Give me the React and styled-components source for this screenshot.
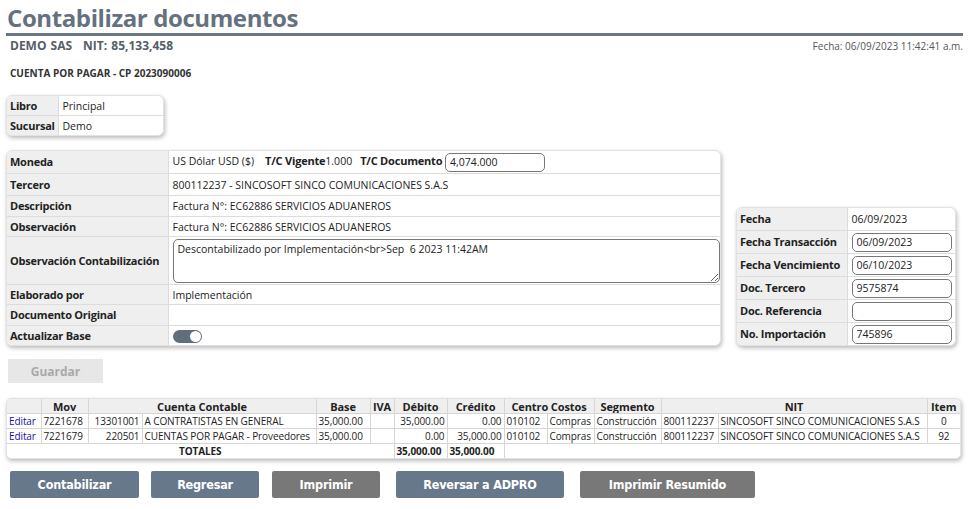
import React from "react";
import styled, { createGlobalStyle } from "styled-components";

const Global = createGlobalStyle`
  body {
    margin: 0;
    background: #fff;
    font-family: "Open Sans", "Noto Sans", sans-serif;
    color: #222;
  }
`;

const Page = styled.div`
  width: 968px;
  height: 509px;
  overflow: hidden;
  padding: 0 5px 0 6px;
  box-sizing: border-box;
`;

const Title = styled.h1`
  margin: 0;
  padding: 2px 0 0 1px;
  font-size: 24px;
  letter-spacing: -0.4px;
  font-weight: 700;
  line-height: 31px;
  color: #65717e;
  border-bottom: 3px solid #6b7785;
`;

const InfoBar = styled.div`
  display: flex;
  justify-content: space-between;
  align-items: baseline;
  padding: 1px 0 0 4px;
  & .company {
    font-size: 12px;
    font-weight: 700;
    color: #555e68;
    word-spacing: 1px;
  }
  & .company span + span {
    margin-left: 11px;
  }
  & .date {
    font-size: 10px;
    color: #555;
  }
`;

const DocTitle = styled.div`
  margin: 12px 0 0 4px;
  font-size: 10px;
  font-weight: 700;
  color: #333;
`;

const Box = styled.div`
  background: #fff;
  border-radius: 6px;
  box-shadow: 1px 2px 4px rgba(0, 0, 0, 0.28);
  border: 1px solid #e2e2e2;
  overflow: hidden;
  width: ${(p) => p.$w}px;
`;

const FormTable = styled.table`
  width: 100%;
  border-collapse: collapse;
  table-layout: fixed;
  font-size: 10.5px;
  line-height: 14px;
  & td {
    border-top: 1px solid #dcdcdc;
    padding: 0 3px 0 4px;
    height: ${(p) => p.$rowH || 19}px;
    white-space: nowrap;
    overflow: hidden;
  }
  & tr:first-child td {
    border-top: none;
  }
  & td.lbl {
    background: #efefef;
    font-weight: 700;
    font-size: 11px;
    letter-spacing: -0.25px;
    color: #222;
    border-right: 1px solid #dcdcdc;
    padding: 0 3px;
  }
`;

const Input = styled.input`
  font-family: "Open Sans", sans-serif;
  font-size: 10.5px;
  height: 19px;
  width: ${(p) => p.$w}px;
  box-sizing: border-box;
  border: 1px solid #777;
  border-radius: 5px;
  padding: 0 4px;
  color: #222;
  margin: 0;
  vertical-align: middle;
  display: ${(p) => (p.$block ? "block" : "inline-block")};
`;

const TextArea = styled.textarea`
  font-family: "Open Sans", sans-serif;
  font-size: 10.5px;
  width: 547px;
  height: 44px;
  box-sizing: border-box;
  border: 1px solid #777;
  border-radius: 5px;
  padding: 2px 4px;
  margin: 1px 0 0 0;
  display: block;
  color: #222;
`;

const Toggle = styled.span`
  display: inline-block;
  position: relative;
  width: 29px;
  height: 13px;
  border-radius: 7px;
  background: #5f6e7c;
  vertical-align: middle;
  &::after {
    content: "";
    position: absolute;
    right: 1px;
    top: 1px;
    width: 11px;
    height: 11px;
    border-radius: 50%;
    background: #fff;
  }
`;

const Bold = styled.b`
  font-weight: 700;
  font-size: 11px;
  letter-spacing: -0.2px;
  margin-left: ${(p) => p.$ml || 0}px;
`;

const Section = styled.div`
  display: flex;
  align-items: flex-end;
  gap: 15px;
  margin-top: ${(p) => p.$mt || 0}px;
`;

const GuardarBtn = styled.button`
  margin: 13px 0 0 2px;
  width: 95px;
  height: 24px;
  border: none;
  background: #e7e7e7;
  color: #a9a9a9;
  font-family: "Open Sans", sans-serif;
  font-weight: 700;
  font-size: 12px;
  display: block;
`;

const GridBox = styled(Box)`
  margin-top: 15px;
  border-radius: 5px;
`;

const Grid = styled.table`
  width: 100%;
  border-collapse: collapse;
  font-size: 10px;
  letter-spacing: -0.1px;
  table-layout: fixed;
  & th,
  & td {
    border: 1px solid #d6d6d6;
    padding: 0 2px;
    height: 14px;
    line-height: 13px;
    white-space: nowrap;
    overflow: hidden;
  }
  & tr:first-child th {
    border-top: none;
  }
  & th:first-child,
  & td:first-child {
    border-left: none;
  }
  & th:last-child,
  & td:last-child {
    border-right: none;
  }
  & tr:last-child td {
    border-bottom: none;
  }
  & th {
    background: #efefef;
    font-weight: 700;
    font-size: 11px;
    text-align: center;
  }
  & td.r {
    text-align: right;
  }
  & td.c {
    text-align: center;
  }
  & td.b {
    font-weight: 700;
  }
  & a {
    color: #1a0dab;
    text-decoration: none;
  }
`;

const Actions = styled.div`
  display: flex;
  margin: 12px 0 0 4px;
`;

const ActionBtn = styled.button`
  height: 27px;
  width: ${(p) => p.$w}px;
  margin-right: ${(p) => p.$mr}px;
  border: none;
  border-radius: 2px;
  background: ${(p) => (p.$gray ? "#787878" : "#67788a")};
  color: #fff;
  font-family: "DejaVu Sans Condensed", "Liberation Sans Narrow", sans-serif;
  font-weight: 700;
  font-size: 12.5px;
  letter-spacing: -0.2px;
`;

const cols = [34, 47, 54, 174, 54, 24, 53, 57, 43, 47, 67, 57, 209, 33];

const rows = [
  ["7221678", "13301001", "A CONTRATISTAS EN GENERAL", "35,000.00", "35,000.00", "0.00", "0"],
  ["7221679", "220501", "CUENTAS POR PAGAR - Proveedores", "35,000.00", "0.00", "35,000.00", "92"],
];

const sideRows = [
  ["Fecha Transacción", "06/09/2023"],
  ["Fecha Vencimiento", "06/10/2023"],
  ["Doc. Tercero", "9575874"],
  ["Doc. Referencia", ""],
  ["No. Importación", "745896"],
];

export default function App() {
  return (
    <Page>
      <Global />
      <Title>Contabilizar documentos</Title>
      <InfoBar>
        <div className="company">
          <span>DEMO SAS</span>
          <span>NIT: 85,133,458</span>
        </div>
        <div className="date">Fecha: 06/09/2023 11:42:41 a.m.</div>
      </InfoBar>
      <DocTitle>CUENTA POR PAGAR - CP 2023090006</DocTitle>

      <Section $mt={15}>
        <Box $w={156}>
          <FormTable $rowH={19}>
            <colgroup>
              <col style={{ width: 51 }} />
              <col />
            </colgroup>
            <tbody>
              <tr>
                <td className="lbl">Libro</td>
                <td>Principal</td>
              </tr>
              <tr>
                <td className="lbl">Sucursal</td>
                <td>Demo</td>
              </tr>
            </tbody>
          </FormTable>
        </Box>
      </Section>

      <Section $mt={14}>
        <Box $w={713}>
          <FormTable>
            <colgroup>
              <col style={{ width: 161 }} />
              <col />
            </colgroup>
            <tbody>
              <tr>
                <td className="lbl" style={{ height: 22 }}>Moneda</td>
                <td>
                  US Dólar USD ($)
                  <Bold $ml={11}>T/C Vigente</Bold>1.000
                  <Bold $ml={8}>T/C Documento</Bold>{" "}
                  <Input $w={100} defaultValue="4,074.000" />
                </td>
              </tr>
              <tr>
                <td className="lbl" style={{ height: 21 }}>Tercero</td>
                <td>800112237 - SINCOSOFT SINCO COMUNICACIONES S.A.S</td>
              </tr>
              <tr>
                <td className="lbl" style={{ height: 20 }}>Descripción</td>
                <td>Factura N°: EC62886 SERVICIOS ADUANEROS</td>
              </tr>
              <tr>
                <td className="lbl">Observación</td>
                <td>Factura N°: EC62886 SERVICIOS ADUANEROS</td>
              </tr>
              <tr>
                <td className="lbl" style={{ height: 47 }}>Observación Contabilización</td>
                <td>
                  <TextArea defaultValue="Descontabilizado por Implementación<br>Sep  6 2023 11:42AM" />
                </td>
              </tr>
              <tr>
                <td className="lbl">Elaborado por</td>
                <td>Implementación</td>
              </tr>
              <tr>
                <td className="lbl" style={{ height: 20 }}>Documento Original</td>
                <td></td>
              </tr>
              <tr>
                <td className="lbl" style={{ height: 18 }}>Actualizar Base</td>
                <td>
                  <Toggle />
                </td>
              </tr>
            </tbody>
          </FormTable>
        </Box>

        <Box $w={218}>
          <FormTable $rowH={22}>
            <colgroup>
              <col style={{ width: 110 }} />
              <col />
            </colgroup>
            <tbody>
              <tr>
                <td className="lbl" style={{ height: 16 }}>Fecha</td>
                <td>06/09/2023</td>
              </tr>
              {sideRows.map(([label, value]) => (
                <tr key={label}>
                  <td className="lbl">{label}</td>
                  <td>
                    <Input $w={100} $block defaultValue={value} />
                  </td>
                </tr>
              ))}
            </tbody>
          </FormTable>
        </Box>
      </Section>

      <GuardarBtn disabled>Guardar</GuardarBtn>

      <GridBox $w={953}>
        <Grid>
          <colgroup>
            {cols.map((w, i) => (
              <col key={i} style={{ width: w }} />
            ))}
          </colgroup>
          <thead>
            <tr>
              <th></th>
              <th>Mov</th>
              <th colSpan={2}>Cuenta Contable</th>
              <th>Base</th>
              <th>IVA</th>
              <th>Débito</th>
              <th>Crédito</th>
              <th colSpan={2}>Centro Costos</th>
              <th>Segmento</th>
              <th colSpan={2}>NIT</th>
              <th>Item</th>
            </tr>
          </thead>
          <tbody>
            {rows.map((r) => (
              <tr key={r[0]}>
                <td><a href="#">Editar</a></td>
                <td>{r[0]}</td>
                <td className="r">{r[1]}</td>
                <td>{r[2]}</td>
                <td>{r[3]}</td>
                <td></td>
                <td className="r">{r[4]}</td>
                <td className="r">{r[5]}</td>
                <td>010102</td>
                <td>Compras</td>
                <td>Construcción</td>
                <td>800112237</td>
                <td>SINCOSOFT SINCO COMUNICACIONES S.A.S</td>
                <td className="c">{r[6]}</td>
              </tr>
            ))}
            <tr>
              <td colSpan={6} className="c b">TOTALES</td>
              <td className="b">35,000.00</td>
              <td className="b">35,000.00</td>
              <td colSpan={6}></td>
            </tr>
          </tbody>
        </Grid>
      </GridBox>

      <Actions>
        <ActionBtn $w={129} $mr={12}>Contabilizar</ActionBtn>
        <ActionBtn $w={108} $mr={13}>Regresar</ActionBtn>
        <ActionBtn $w={108} $mr={16} $gray>Imprimir</ActionBtn>
        <ActionBtn $w={168} $mr={16}>Reversar a ADPRO</ActionBtn>
        <ActionBtn $w={175} $mr={0} $gray>Imprimir Resumido</ActionBtn>
      </Actions>
    </Page>
  );
}
